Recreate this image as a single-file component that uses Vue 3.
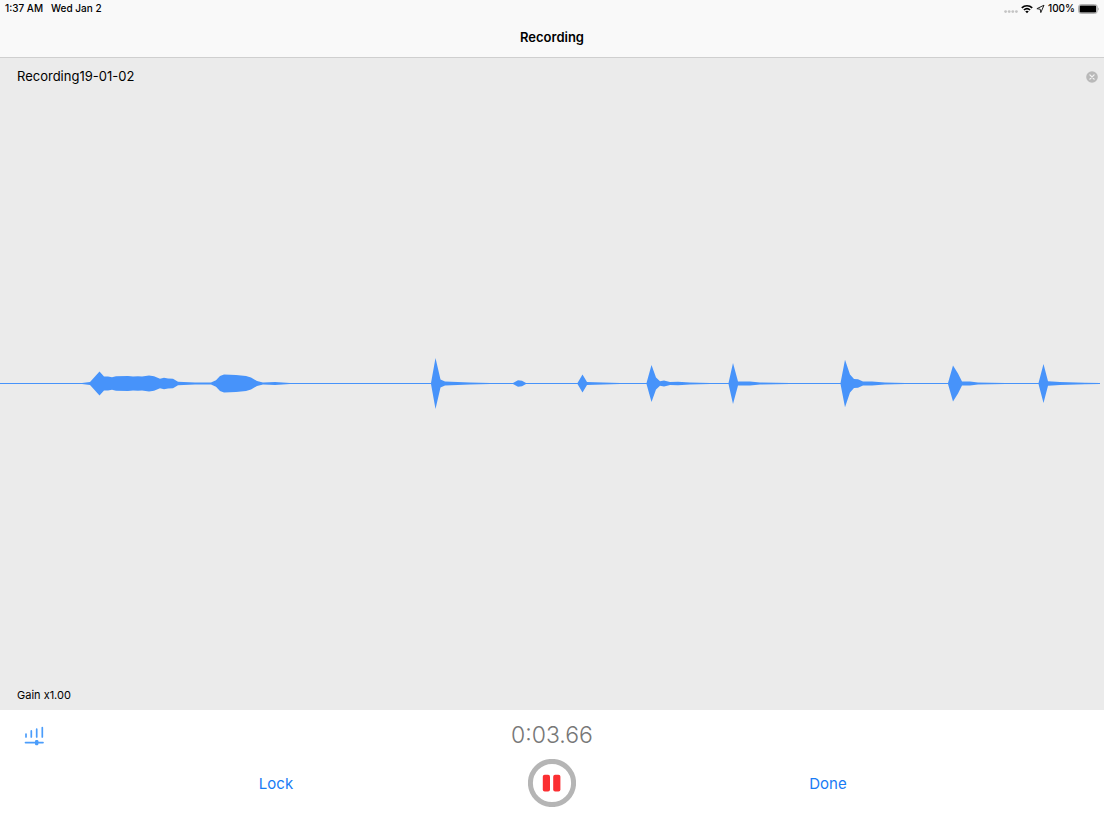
<script setup>
import { computed } from 'vue'

// Peak samples: [position, half amplitude]
const peaks = [
  [0, 0.6], [82, 0.6], [90, 1.5], [95, 7], [99.5, 12], [104, 7], [108, 7], [112, 6.2], [116, 7.3],
  [128, 7.6], [133, 7], [138, 7.3], [142, 7], [149, 8], [154, 7.2], [160, 4.8], [164, 5.7], [168, 5],
  [173, 4.8], [178, 1.8], [195, 0.9], [211, 0.9], [216, 3.2], [220, 7.4], [224, 9], [236, 8.6],
  [246, 7.4], [251, 6], [257, 2.5], [263, 1], [275, 1.5], [290, 0.6],
  [431, 0.6], [435.5, 25.5], [440.5, 4], [445, 2], [470, 1.1], [490, 0.6],
  [513, 0.6], [518, 3.2], [522, 2.8], [526, 0.6], [577.5, 0.6], [582.5, 9], [587, 1.5], [595, 1.3], [620, 0.6],
  [646.5, 0.6], [651.5, 18.5], [656, 6], [660, 2.3], [664, 2.9], [670, 1.4], [678, 1.7], [690, 0.9], [710, 0.6],
  [728.5, 0.6], [733, 20.5], [738, 2], [750, 1.9], [760, 1], [790, 0.6],
  [840.5, 0.6], [845, 23.8], [850, 9], [854, 4.5], [858, 4.3], [863, 2], [872, 2], [885, 1.1], [905, 0.6],
  [948, 0.6], [953, 18], [958, 10], [962, 1.9], [970, 2], [978, 1.1], [1005, 0.6],
  [1038.5, 0.6], [1043.5, 19.5], [1048, 2.2], [1060, 1.5], [1085, 0.7], [1100, 0.6],
]
const middle = 30.5
const outline = computed(() => {
  const top = peaks.map(([x, a]) => `${x},${middle - a}`)
  const bottom = [...peaks].reverse().map(([x, a]) => `${x},${middle + a}`)
  return [...top, ...bottom].join(' ')
})
</script>

<template>
  <div class="app">
    <header class="top">
      <div class="status">
        <div class="group">
          <span>1:37 AM</span>
          <span>Wed Jan 2</span>
        </div>
        <div class="group right">
          <svg width="14" height="10" viewBox="0 0 14 10" aria-hidden="true">
            <g fill="#c4c4c4">
              <circle cx="1.6" cy="7.6" r="1.4" /><circle cx="5.2" cy="7.6" r="1.4" />
              <circle cx="8.8" cy="7.6" r="1.4" /><circle cx="12.4" cy="7.6" r="1.4" />
            </g>
          </svg>
          <svg width="12" height="10" viewBox="0 0 12 10" aria-hidden="true">
            <g fill="none" stroke="#000" stroke-width="1.7">
              <path d="M0.8 3.9C3.7 1 8.3 1 11.2 3.9" />
              <path d="M2.9 6C4.7 4.3 7.3 4.3 9.1 6" />
            </g>
            <path d="M4.2 7.3C5.3 6.4 6.7 6.4 7.8 7.3L6 9.2Z" />
          </svg>
          <svg width="9" height="10" viewBox="0 0 9 10" aria-hidden="true">
            <path d="M8 1.2L0.9 4.7L4.2 5.2L4.8 8.6Z" fill="none" stroke="#222" stroke-width="1" stroke-linejoin="round" />
          </svg>
          <span>100%</span>
          <svg width="21" height="10" viewBox="0 0 21 10" aria-hidden="true">
            <rect x="0.5" y="0.5" width="18.8" height="9" rx="2.6" fill="#f9f9f9" stroke="#aaa" stroke-width="0.9" />
            <rect x="1.6" y="1.6" width="16.6" height="6.8" rx="1.2" />
            <path d="M20 3.4C21.1 3.9 21.1 6.1 20 6.6Z" fill="#aaa" />
          </svg>
        </div>
      </div>
      <h1>Recording</h1>
    </header>

    <main class="stage">
      <div class="row">
        <span class="name">Recording19-01-02</span>
        <button class="clear" type="button" aria-label="Discard recording">
          <svg width="12" height="12" viewBox="0 0 12 12">
            <circle cx="6" cy="6" r="5.8" fill="#b9b9b9" />
            <path d="M3.9 3.9L8.1 8.1M8.1 3.9L3.9 8.1" stroke="#f2f2f2" stroke-width="1.3" stroke-linecap="round" />
          </svg>
        </button>
      </div>
      <div class="wave">
        <svg viewBox="0 0 1104 61" preserveAspectRatio="none" role="img" aria-label="Waveform">
          <polygon :points="outline" fill="#4793fa" />
        </svg>
      </div>
      <div class="gain">Gain x1.00</div>
    </main>

    <footer class="panel">
      <div class="meter">
        <button class="levels" type="button" aria-label="Input gain">
          <svg width="20" height="23" viewBox="0 0 20 23">
            <g stroke="#4b9dfb" fill="none" stroke-linecap="round">
              <path d="M2 11V13.9M7.3 7.9V13.9M12.7 6.2V13.9M18.3 4.6V13.9" stroke-width="1.7" />
              <path d="M1.5 19.6H19" stroke-width="1.7" />
            </g>
            <rect x="11" y="17" width="3.4" height="5.2" rx="1.2" fill="#4b9dfb" />
          </svg>
        </button>
        <span class="time">0:03.66</span>
      </div>
      <div class="controls">
        <button class="text" type="button">Lock</button>
        <button class="pause" type="button" aria-label="Pause">
          <svg width="48" height="48" viewBox="0 0 48 48">
            <circle cx="24" cy="24" r="21.6" fill="#fff" stroke="#b5b5b5" stroke-width="5" />
            <rect x="14.8" y="15.8" width="7.2" height="16.6" rx="1.9" fill="#fb2f32" />
            <rect x="25.2" y="15.8" width="7.2" height="16.6" rx="1.9" fill="#fb2f32" />
          </svg>
        </button>
        <button class="text" type="button">Done</button>
      </div>
    </footer>
  </div>
</template>

<style>
body {
  margin: 0;
}
</style>

<style scoped>
.app {
  display: flex;
  flex-direction: column;
  min-height: 100vh;
  background: #fff;
  color: #000;
  font-family: Inter, "Liberation Sans", sans-serif;
}
button {
  padding: 0;
  border: 0;
  background: none;
  font: inherit;
  cursor: pointer;
}
svg {
  display: block;
}
.top {
  background: #f9f9f9;
  border-bottom: 1px solid #cfcfcf;
}
.status {
  display: flex;
  justify-content: space-between;
  padding: 0 5px;
  font-size: 10px;
  font-weight: 500;
  line-height: 17px;
}
.group {
  display: flex;
  align-items: center;
  gap: 8px;
}
.right {
  gap: 3px;
}
h1 {
  margin: 0;
  font-size: 13px;
  font-weight: 600;
  line-height: 40px;
  text-align: center;
}
.stage {
  flex: 1;
  display: flex;
  flex-direction: column;
  background: #ebebeb;
}
.row {
  display: flex;
  justify-content: space-between;
  align-items: center;
  height: 38px;
  padding: 0 6px 0 17px;
}
.name {
  align-self: flex-start;
  font-size: 13px;
  line-height: 36px;
}
.gain {
  padding: 0 17px 1px;
  font-size: 11px;
  line-height: 28px;
  margin-top: 10px;
}
.wave {
  flex: 1;
  display: flex;
  align-items: center;
}
.wave svg {
  width: 100%;
  height: 61px;
}
.panel {
  padding-bottom: 21px;
}
.meter {
  display: grid;
  grid-template-columns: 1fr auto 1fr;
  align-items: center;
  height: 49px;
}
.levels {
  justify-self: start;
  margin-left: 24px;
}
.time {
  color: #777;
  font-size: 23px;
  font-weight: 300;
  line-height: 28px;
}
.controls {
  display: grid;
  grid-template-columns: repeat(3, 1fr);
  align-items: center;
  justify-items: center;
  padding: 0 12.5%;
}
.text {
  color: #187bf5;
  font-size: 15px;
}
</style>
